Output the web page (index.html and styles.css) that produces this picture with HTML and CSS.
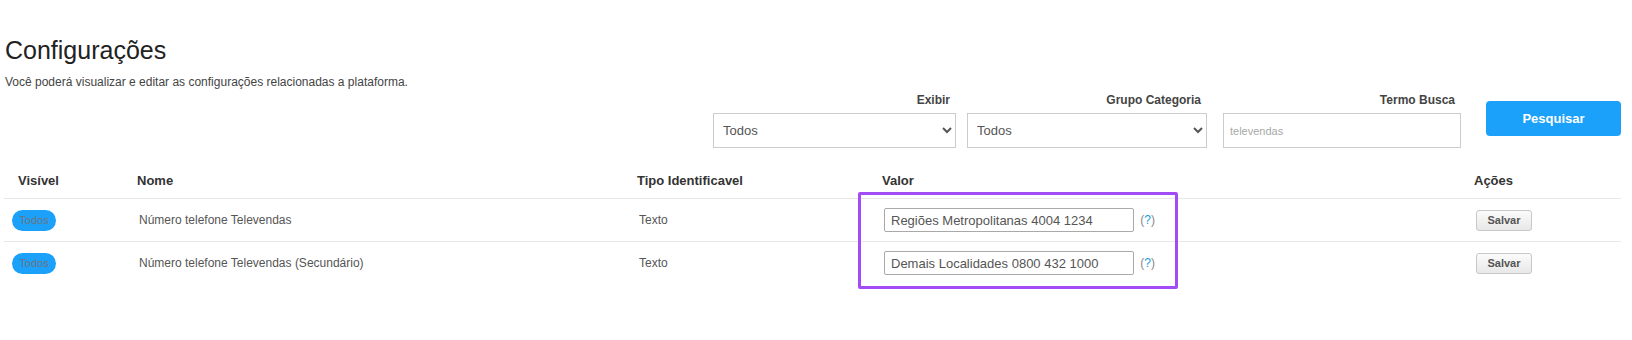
FILE: index.html
```html
<!DOCTYPE html>
<html lang="pt-BR">
<head>
    <meta charset="UTF-8">
    <meta name="viewport" content="width=device-width, initial-scale=1.0">
    <title>Configurações</title>
    <link rel="stylesheet" href="styles.css">
</head>
<body>
    <div class="page">
        <h1>Configurações</h1>
        <p class="subtitle">Você poderá visualizar e editar as configurações relacionadas a plataforma.</p>

        <div class="filters">
            <div class="filter filter-exibir">
                <label>Exibir</label>
                <select>
                    <option>Todos</option>
                </select>
            </div>
            <div class="filter filter-grupo">
                <label>Grupo Categoria</label>
                <select>
                    <option>Todos</option>
                </select>
            </div>
            <div class="filter filter-termo">
                <label>Termo Busca</label>
                <input type="text" class="search-input" value="televendas">
            </div>
            <button class="btn-search">Pesquisar</button>
        </div>

        <div class="table-wrap">
            <table class="config-table">
                <colgroup>
                    <col class="col-visivel">
                    <col class="col-nome">
                    <col class="col-tipo">
                    <col class="col-valor">
                    <col class="col-acoes">
                </colgroup>
                <thead>
                    <tr>
                        <th class="cell-visivel">Visível</th>
                        <th>Nome</th>
                        <th>Tipo Identificavel</th>
                        <th>Valor</th>
                        <th>Ações</th>
                    </tr>
                </thead>
                <tbody>
                    <tr>
                        <td class="cell-visivel"><span class="badge">Todos</span></td>
                        <td>Número telefone Televendas</td>
                        <td>Texto</td>
                        <td>
                            <input type="text" class="value-input" value="Regiões Metropolitanas 4004 1234">
                            <span class="help">(<b>?</b>)</span>
                        </td>
                        <td><button class="btn-save">Salvar</button></td>
                    </tr>
                    <tr>
                        <td class="cell-visivel"><span class="badge">Todos</span></td>
                        <td>Número telefone Televendas (Secundário)</td>
                        <td>Texto</td>
                        <td>
                            <input type="text" class="value-input" value="Demais Localidades 0800 432 1000">
                            <span class="help">(<b>?</b>)</span>
                        </td>
                        <td><button class="btn-save">Salvar</button></td>
                    </tr>
                </tbody>
            </table>
            <div class="highlight"></div>
        </div>
    </div>
</body>
</html>
```

FILE: styles.css
```css
:root {
    --primary-color: #1ba1fa;
    --text-color: #555555;
    --heading-color: #333333;
    --border-color: #cccccc;
    --line-color: #e6e8eb;
}

body {
    font-family: 'Liberation Sans', Arial, sans-serif;
    margin: 0;
    background-color: #ffffff;
    color: var(--text-color);
}

.page {
    padding: 36px 11px 50px 4px;
}

h1 {
    margin: 0 0 0 1px;
    font-size: 25px;
    line-height: 28px;
    font-weight: normal;
    color: #222222;
}

.subtitle {
    margin: 11px 0 0 1px;
    font-size: 12px;
    line-height: 14px;
    color: #444444;
}

/* Filters */
.filters {
    display: flex;
    justify-content: flex-end;
    align-items: flex-start;
    margin-top: 4px;
}

.filter {
    display: flex;
    flex-direction: column;
}

.filter label {
    text-align: right;
    font-size: 12px;
    line-height: 14px;
    font-weight: bold;
    color: #444444;
    padding-right: 6px;
    margin-bottom: 6px;
}

.filter-exibir { width: 243px; }
.filter-grupo { width: 240px; margin-left: 11px; }
.filter-termo { width: 238px; margin-left: 16px; }

.filter select {
    height: 35px;
    border: 1px solid var(--border-color);
    border-radius: 0;
    background-color: #ffffff;
    font-family: inherit;
    font-size: 13px;
    color: var(--text-color);
    padding: 0 6px 0 5px;
    outline: none;
}

.search-input {
    box-sizing: border-box;
    height: 35px;
    border: 1px solid var(--border-color);
    padding: 0 6px;
    font-family: inherit;
    font-size: 11px;
    color: #a8a8a8;
    outline: none;
}

.btn-search {
    width: 135px;
    height: 35px;
    margin: 8px 0 0 25px;
    border: none;
    border-radius: 4px;
    background-color: var(--primary-color);
    color: #ffffff;
    font-family: inherit;
    font-size: 13px;
    font-weight: bold;
    cursor: pointer;
}

/* Table */
.table-wrap {
    position: relative;
    margin-top: 15px;
}

.config-table {
    width: 100%;
    table-layout: fixed;
    border-collapse: collapse;
}

.col-visivel { width: 123px; }
.col-nome { width: 500px; }
.col-tipo { width: 245px; }
.col-valor { width: 592px; }
.col-acoes { width: 157px; }

.config-table th {
    text-align: left;
    font-size: 13px;
    line-height: 15px;
    font-weight: bold;
    color: var(--heading-color);
    padding: 10px 10px 10px;
    border-bottom: 1px solid var(--line-color);
}

.config-table td {
    height: 42px;
    padding: 0 10px 0 12px;
    font-size: 12px;
    color: var(--text-color);
    border-bottom: 1px solid var(--line-color);
    vertical-align: middle;
}

.config-table tbody tr:last-child td {
    border-bottom: none;
}

.config-table th.cell-visivel {
    padding-left: 14px;
}

.config-table td.cell-visivel {
    padding-left: 8px;
}

.badge {
    display: inline-block;
    width: 44px;
    height: 21px;
    line-height: 21px;
    border-radius: 11px;
    background-color: var(--primary-color);
    color: #6c7480;
    font-size: 11px;
    text-align: center;
    vertical-align: middle;
}

.value-input {
    box-sizing: border-box;
    width: 250px;
    height: 24px;
    border: 1px solid #a9a9a9;
    border-radius: 2px;
    padding: 0 6px;
    font-family: inherit;
    font-size: 13px;
    color: var(--text-color);
    vertical-align: middle;
    outline: none;
}

.help {
    margin-left: 3px;
    font-size: 12px;
    color: #888888;
    vertical-align: middle;
}

.help b {
    font-weight: normal;
    color: #1a9ce8;
}

.btn-save {
    width: 56px;
    height: 21px;
    padding: 0;
    border: 1px solid #c8c8c8;
    border-radius: 3px;
    background: linear-gradient(#fbfbfb, #e8e8e8);
    color: #555555;
    font-family: inherit;
    font-size: 11px;
    font-weight: bold;
    vertical-align: middle;
    cursor: pointer;
}

/* Highlight around the Valor column */
.highlight {
    position: absolute;
    left: 854px;
    top: 29px;
    width: 320px;
    height: 97px;
    box-sizing: border-box;
    border: 3px solid #a24cf6;
    border-radius: 2px;
    pointer-events: none;
}
```
